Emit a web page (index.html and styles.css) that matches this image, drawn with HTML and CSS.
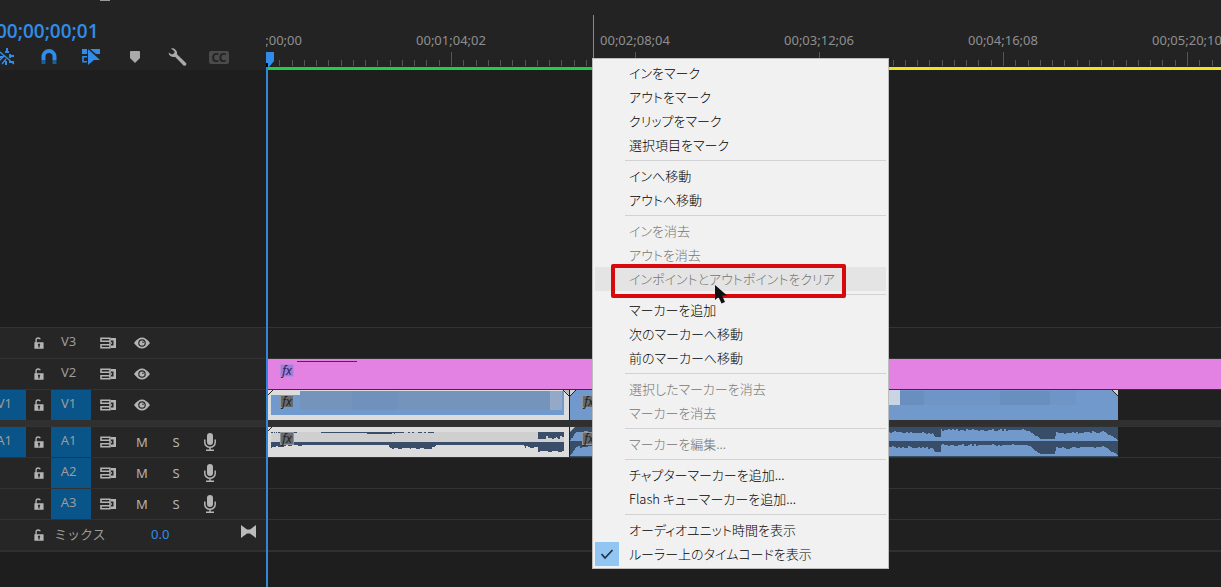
FILE: index.html
```html
<!DOCTYPE html>
<html lang="ja">
<head>
<meta charset="utf-8">
<title>タイムライン</title>
<link rel="stylesheet" href="styles.css">
</head>
<body>
<svg class="defs" aria-hidden="true">
  <symbol id="lock" viewBox="0 0 12 16"><path d="M2.500 8V4.500q0-2.500 2.500-2.500 2 0 2.500 1.500" fill="none" stroke="currentColor" stroke-width="1.600"/><path fill-rule="evenodd" d="M.5 7h11v8H.5zM6 8.500a1.500 1.500 0 0 0-.8 2.700V13.500h1.600v-2.300A1.500 1.500 0 0 0 6 8.500z" fill="currentColor"/></symbol>
  <symbol id="sync" viewBox="0 0 16 12"><path d="M1 1.200h9v3H1zM1 7.800h9v3H1z" fill="none" stroke="currentColor" stroke-width="1.600"/><path d="M11 1h5v10h-5V8.500h2.500v-5H11zM9 5.200h3v1.600H9z" fill="currentColor"/></symbol>
  <symbol id="eye" viewBox="0 0 16 12"><path fill-rule="evenodd" d="M0 6q8-11 16 0-8 11-16 0zM8 2.200a3.800 3.800 0 1 0 0 7.600 3.800 3.800 0 0 0 0-7.600z" fill="currentColor"/><circle cx="8" cy="6" r="2.600" fill="currentColor"/><circle cx="9" cy="5.300" r=".8" fill="#262626"/></symbol>
  <symbol id="mic" viewBox="0 0 14 18"><rect x="4" y="0" width="6" height="12" rx="3" fill="currentColor"/><path d="M1.800 6.500v3a5.200 4.800 0 0 0 10.400 0v-3M7 14v3M3 17.200h8" fill="none" stroke="currentColor" stroke-width="1.500"/></symbol>
</svg>
<main class="app">
  <header class="top">
    <div class="controls">
      <i class="grip"></i>
      <div class="timecode">00;00;00;01</div>
      <div class="tools">
        <button class="tool tool-nest" aria-label="ネスト"><svg width="18" height="18" viewBox="0 0 18 18" fill="none" stroke="currentColor"><path stroke-width="2" d="M9 0v5M7 4h4M12 6v4M11 8h5M0 9h5M11 14h5M8 13v4"/><path stroke-width="1.400" d="M2 4l14 12M6 8l-5 5M8 11l-4 5"/></svg></button>
        <button class="tool tool-snap" aria-label="スナップ"><svg width="16" height="16" viewBox="0 0 16 16"><path d="M2.500 11V7.500a5.500 5.500 0 0 1 11 0V11" fill="none" stroke="currentColor" stroke-width="4"/><path d="M.5 11h4v4h-4zM11.500 11h4v4h-4z" fill="#1d5c9f"/></svg></button>
        <button class="tool tool-link" aria-label="リンクされた選択"><svg width="19" height="18" viewBox="0 0 19 18"><path d="M0 1h5v5H0zM8 1h10v5h-4L8 1z" fill="currentColor"/><path d="M5 8.800H1v5h4" fill="none" stroke="currentColor" stroke-width="1.600"/><path d="M6 1l12 11h-6l-6 5z" fill="currentColor"/></svg></button>
        <button class="tool tool-mark" aria-label="マーカーを追加"><svg width="10" height="12" viewBox="0 0 10 12"><path d="M1 0h8q1 0 1 1v6l-5 5-5-5V1q0-1 1-1z" fill="currentColor"/></svg></button>
        <button class="tool tool-wrench" aria-label="表示設定"><svg width="20" height="20" viewBox="0 0 20 20"><path d="M3 1.500a5 5 0 0 1 6 5.700l9 8.800a1.800 1.800 0 0 1-2.500 2.500L7 9.700A5 5 0 0 1 .5 5.500l3.500 2 2.300-1.300.2-2z" fill="currentColor"/></svg></button>
        <button class="tool tool-cc" aria-label="キャプション">CC</button>
      </div>
    </div>
    <div class="ruler">
      <div class="ruler-cells">
        <span class="cell">00;00;00;00</span><span class="cell">00;01;04;02</span><span class="cell">00;02;08;04</span><span class="cell">00;03;12;06</span><span class="cell">00;04;16;08</span><span class="cell">00;05;20;10</span>
      </div>
      <svg class="ticks" id="ticks" aria-hidden="true"></svg>
      <div class="render"><i class="render-green"></i><i class="render-yellow"></i></div>
    </div>
  </header>

  <div class="blank"></div>

  <section class="tracks">
    <div class="track">
      <div class="head"><span class="patch"></span><button class="ic" aria-label="ロック"><svg width="12" height="16"><use href="#lock"/></svg></button><button class="target">V3</button><button class="ic sync" aria-label="同期ロック"><svg width="16" height="12"><use href="#sync"/></svg></button><button class="ic" aria-label="表示"><svg width="16" height="12"><use href="#eye"/></svg></button></div>
      <div class="lane"></div>
    </div>
    <div class="track">
      <div class="head"><span class="patch"></span><button class="ic" aria-label="ロック"><svg width="12" height="16"><use href="#lock"/></svg></button><button class="target">V2</button><button class="ic sync" aria-label="同期ロック"><svg width="16" height="12"><use href="#sync"/></svg></button><button class="ic" aria-label="表示"><svg width="16" height="12"><use href="#eye"/></svg></button></div>
      <div class="lane"><div class="clip pink"><span class="fx">fx</span><i class="name-line"></i></div></div>
    </div>
    <div class="track">
      <div class="head"><button class="patch on">V1</button><button class="ic" aria-label="ロック"><svg width="12" height="16"><use href="#lock"/></svg></button><button class="target on">V1</button><button class="ic sync" aria-label="同期ロック"><svg width="16" height="12"><use href="#sync"/></svg></button><button class="ic" aria-label="表示"><svg width="16" height="12"><use href="#eye"/></svg></button></div>
      <div class="lane">
        <div class="clip first">
          <svg class="art" width="301" height="30"><path fill="#dcdcdc" d="M0 0h301v30H0z"/><path fill="#7099cd" d="M3 5h29V1h264v24H3z"/><path fill="#7594bb" d="M32 1h250v19H32z"/><path fill="#7191bd" d="M84 1h46v19H84z"/><path fill="#94a9c7" d="M282 1h12v19h-12z"/><path d="M0 5l5-5M295 0l6 6" stroke="#222" stroke-width="1"/><path fill="#b8b8b8" d="M296 0h5v5z"/></svg>
          <span class="fx">fx</span>
        </div>
        <div class="clip second">
          <svg class="art" width="548" height="30"><path fill="#7199cc" d="M0 0h548v30H0z"/><path fill="#c9d5e3" d="M300 0h30v15h-30z"/><path fill="#688fbe" d="M330 1h150v14H330z"/><path fill="#6e95c5" d="M354 1h76v14h-76zM480 1h26v14h-26z"/><path fill="#d0d0d0" d="M0 0h6L0 6zM542 0h6v6z"/><path d="M0 6l6-6M542 0l6 6" stroke="#222"/></svg>
          <span class="fx">fx</span>
        </div>
      </div>
    </div>
    <div class="divider"></div>
    <div class="track">
      <div class="head"><button class="patch on">A1</button><button class="ic" aria-label="ロック"><svg width="12" height="16"><use href="#lock"/></svg></button><button class="target on">A1</button><button class="ic sync" aria-label="同期ロック"><svg width="16" height="12"><use href="#sync"/></svg></button><button class="ic">M</button><button class="ic">S</button><button class="ic" aria-label="録音"><svg width="14" height="18"><use href="#mic"/></svg></button></div>
      <div class="lane">
        <div class="clip first"><svg class="art" id="wave1" width="301" height="30"></svg><span class="fx">fx</span></div>
        <div class="clip second"><svg class="art" id="wave2" width="548" height="30"></svg><span class="fx">fx</span></div>
      </div>
    </div>
    <div class="track">
      <div class="head"><span class="patch"></span><button class="ic" aria-label="ロック"><svg width="12" height="16"><use href="#lock"/></svg></button><button class="target on">A2</button><button class="ic sync" aria-label="同期ロック"><svg width="16" height="12"><use href="#sync"/></svg></button><button class="ic">M</button><button class="ic">S</button><button class="ic" aria-label="録音"><svg width="14" height="18"><use href="#mic"/></svg></button></div>
      <div class="lane"></div>
    </div>
    <div class="track">
      <div class="head"><span class="patch"></span><button class="ic" aria-label="ロック"><svg width="12" height="16"><use href="#lock"/></svg></button><button class="target on">A3</button><button class="ic sync" aria-label="同期ロック"><svg width="16" height="12"><use href="#sync"/></svg></button><button class="ic">M</button><button class="ic">S</button><button class="ic" aria-label="録音"><svg width="14" height="18"><use href="#mic"/></svg></button></div>
      <div class="lane"></div>
    </div>
    <div class="track">
      <div class="head"><span class="patch"></span><button class="ic" aria-label="ロック"><svg width="12" height="16"><use href="#lock"/></svg></button><span class="mix">ミックス</span><span class="mix-value">0.0</span><button class="bowtie" aria-label="展開"><svg width="15" height="13" viewBox="0 0 15 13"><path d="M0 0l6 4.500h3L15 0v13L9 8.500H6L0 13z" fill="currentColor"/></svg></button></div>
      <div class="lane"></div>
    </div>
  </section>
  <div class="foot"></div>

  <svg class="playhead" width="8" height="16" viewBox="0 0 8 16" aria-hidden="true"><path d="M0 0h8v9l-5 6H0z" fill="#318ce7"/><path d="M0 11h2v4H0z" fill="#000"/></svg>
  <i class="playline"></i>
  <i class="hoverline"></i>

  <div class="menu" role="menu">
    <button role="menuitem">インをマーク</button>
    <button role="menuitem">アウトをマーク</button>
    <button role="menuitem">クリップをマーク</button>
    <button role="menuitem">選択項目をマーク</button>
    <hr>
    <button role="menuitem">インへ移動</button>
    <button role="menuitem">アウトへ移動</button>
    <hr>
    <button role="menuitem" disabled>インを消去</button>
    <button role="menuitem" disabled>アウトを消去</button>
    <button role="menuitem" class="hot" disabled>インポイントとアウトポイントをクリア</button>
    <hr>
    <button role="menuitem">マーカーを追加</button>
    <button role="menuitem">次のマーカーへ移動</button>
    <button role="menuitem">前のマーカーへ移動</button>
    <hr>
    <button role="menuitem" disabled>選択したマーカーを消去</button>
    <button role="menuitem" disabled>マーカーを消去</button>
    <hr>
    <button role="menuitem" disabled>マーカーを編集...</button>
    <hr>
    <button role="menuitem">チャプターマーカーを追加...</button>
    <button role="menuitem">Flash キューマーカーを追加...</button>
    <hr>
    <button role="menuitem">オーディオユニット時間を表示</button>
    <button role="menuitemcheckbox" aria-checked="true" class="checked"><span class="check"><svg width="14" height="12" viewBox="0 0 14 12"><path d="M1.500 6l3.500 4L12.500 2" fill="none" stroke="#1f3345" stroke-width="1.700"/></svg></span>ルーラー上のタイムコードを表示</button>
    <div class="callout"></div>
    <svg class="cursor" width="14" height="20" viewBox="0 0 14 20" aria-hidden="true"><path d="M1 1v15l3.500-3 3 6.500 3.500-1.500-3-6.500h5z" fill="#111"/></svg>
  </div>
</main>
<script src="timeline.js"></script>
</body>
</html>
```

FILE: styles.css
```css
* { box-sizing: border-box; }
body { margin: 0; background: #1e1e1e; font-family: "Noto Sans", "Noto Sans CJK JP", sans-serif; font-size: 13px; color: #9c9c9c; overflow: hidden; }
button { appearance: none; border: 0; margin: 0; padding: 0; background: none; font: inherit; color: inherit; }
svg { display: block; }
.defs { position: absolute; width: 0; height: 0; }
.app { position: relative; min-height: 100vh; display: flex; flex-direction: column; overflow: hidden; }

.top { display: grid; grid-template-columns: 266px 1fr; height: 70px; background: #232323; }
.controls { overflow: hidden; }
.grip { display: block; width: 10px; height: 1px; margin-left: 100px; background: #999; }
.timecode { margin: 17px 0 0 -4px; font-family: "Open Sans", "Noto Sans", sans-serif; font-size: 19px; font-weight: 600; line-height: 26px; color: #318ce7; }
.tools { display: flex; align-items: center; height: 26px; color: #aaa; }
.tool { display: flex; }
.tool-nest { margin-left: -2px; }
.tool-snap { margin-left: 25px; }
.tool-link { margin-left: 25px; }
.tool-nest, .tool-snap, .tool-link { color: #318ce7; }
.tool-mark { margin-left: 29px; }
.tool-wrench { margin-left: 28px; }
.tool-cc { margin-left: 21px; width: 20px; height: 13px; justify-content: center; align-items: center; border-radius: 2px; background: #4b4b4b; color: #232323; font-size: 12px; font-weight: 700; line-height: 13px; }

.ruler { display: flex; flex-direction: column; overflow: hidden; min-width: 0; }
.ruler-cells { display: flex; margin-left: -91px; height: 52px; padding-top: 30px; }
.cell { flex: none; width: 184px; text-align: center; line-height: 20px; color: #8f8f8f; }
.ticks { width: 100%; height: 15px; }
.render { display: flex; height: 3px; padding-left: 2px; }
.render-green { width: 325px; background: #1fd046; }
.render-yellow { flex: 1; background: #efe51f; }

.blank { flex: 1; }
.track { display: grid; grid-template-columns: 266px 1fr; height: 31px; border-top: 1px solid #333; }
.head { display: flex; background: #262626; overflow: hidden; }
.patch { display: flex; align-items: center; width: 26px; flex: none; margin-right: 8px; line-height: 18px; padding-bottom: 4px; }
.patch.on { background: #095488; justify-content: flex-end; padding-right: 14px; }
.ic { display: flex; align-items: center; justify-content: center; width: 34px; color: #b4b4b4; }
.patch + .ic { width: 10px; margin-right: 7px; }
.target { width: 40px; padding: 0 5px 4px 0; }
.target.on { background: #095488; }
.ic.sync { width: 34px; }
.mix { width: 95px; padding-left: 3px; line-height: 28px; }
.mix-value { flex: 1; padding-left: 5px; line-height: 28px; color: #318ce7; }
.bowtie { display: flex; padding: 5px 10px 0 0; color: #bbb; }
.lane { display: flex; min-width: 0; padding-left: 2px; overflow: hidden; background: #202020; }
.clip { position: relative; flex: none; height: 30px; }
.first { width: 301px; margin-right: 1px; }
.second { width: 548px; }
.pink { flex: 1; background: #e382e3; }
.fx { position: absolute; left: 12px; top: 5px; width: 14px; height: 13px; border: 1px solid #8f959b; background: #686b6d; color: #222; font-size: 12px; font-style: italic; line-height: 11px; text-align: center; }
.pink .fx { background: #a37bdc; border-color: #b88bdd; color: #35214e; }
.name-line { position: absolute; left: 29px; top: 2px; width: 60px; height: 1px; background: #4a2a4a; }
.divider { height: 6px; background: #303030; }
.foot { height: 37px; border-top: 2px solid #303030; }

.playhead { position: absolute; left: 266px; top: 52px; }
.playline { position: absolute; left: 266px; top: 67px; bottom: 0; width: 2px; background: #3187d8; }
.hoverline { position: absolute; left: 593px; top: 15px; width: 1px; height: 43px; background: #8a8a8a; }

.menu { position: absolute; left: 592px; top: 58px; width: 297px; padding: 2px; border: 1px solid #bdbdbd; background: #f1f1f1; color: #000; font-family: "Noto Sans CJK JP", sans-serif; font-size: 13px; font-weight: 300; font-feature-settings: "palt"; }
.menu button { display: flex; align-items: center; width: 100%; height: 24px; padding-left: 34px; line-height: 24px; white-space: nowrap; }
.menu button:disabled { color: #757575; }
.menu .hot { background: #e4e4e4; }
.menu hr { height: 1px; margin: 3px 0 3px 30px; border: 0; background: #d2d2d2; }
.menu .checked { padding-left: 0; }
.check { display: flex; align-items: center; justify-content: center; width: 24px; height: 24px; margin-right: 10px; background: #91c6f3; }
.callout { position: absolute; left: 18px; top: 205px; width: 235px; height: 34px; border: 4px solid #d7090d; border-radius: 2px; }
.cursor { position: absolute; left: 121px; top: 225px; }
```

FILE: timeline.js
```js
// Ruler ticks: one major tick per label, fifteen divisions between majors.
let ticks = '';
for (let i = 0; i < 240; i++) {
  const x = Math.round(1 + i * 184 / 15);
  const top = i % 15 === 0 ? 0 : 8;
  ticks += `M${x} ${top}h1V14h-1z`;
}
document.getElementById('ticks').innerHTML = `<path fill="#555" d="${ticks}"/>`;

function noise(n) {
  const v = Math.sin(n * 12.9898) * 43758.5453;
  return v - Math.floor(v) - 0.5;
}

// Envelope points are [x, depth, jitter]; depth is interpolated between points.
function bars(points, y, limit) {
  let d = '';
  for (let x = points[0][0]; x < points[points.length - 1][0]; x++) {
    const i = points.findIndex((p, n) => n + 1 < points.length && x >= p[0] && x < points[n + 1][0]);
    const a = points[i], b = points[i + 1];
    const t = (x - a[0]) / (b[0] - a[0]);
    const h = Math.round(Math.min(limit, a[1] + (b[1] - a[1]) * t + noise(Math.floor(x / 2) + y) * a[2]));
    if (h > 0) d += `M${x} ${y}h1v${h}h-1z`;
  }
  return d;
}

const up1 = [[3, 1, 1], [14, 0, 0], [28, 1, 1], [30, 0, 0], [122, 2, 2], [140, 1, 2], [165, 1, 0], [166, 0, 0], [257, 0, 1], [264, 0, 0], [269, 0, 0], [270, 7, 3], [280, 5, 3], [296, 6, 2]];
const low1 = [[3, 5, 2], [36, 3, 1], [120, 3, 1], [122, 7, 2], [166, 6, 2], [168, 3, 1], [255, 3, 1], [257, 5, 2], [269, 5, 2], [270, 10, 1], [276, 9, 2], [296, 10, 1]];
document.getElementById('wave1').innerHTML =
  `<path fill="#dcdcdc" d="M0 0h301v30H0z"/><path fill="#cfcfcf" d="M3 5h293v10H3z"/><path fill="#3a4e69" d="${bars(up1, 5, 10)}${bars(low1, 15, 10)}"/><path stroke="#222" d="M0 4l4-4"/>`;

const env2 = [[0, 13, 1], [6, 5, 3], [318, 5, 2], [362, 6, 2], [365, 10, 1], [370, 10, 1], [371, 3, 2], [455, 3, 2], [461, 5, 2], [470, 12, 0], [484, 12, 0], [486, 6, 2], [534, 5, 2], [546, 12, 0], [548, 13, 0]];
document.getElementById('wave2').innerHTML =
  `<path fill="#7199cc" d="M0 0h548v30H0z"/><path fill="#384d67" d="${bars(env2, 0, 14)}${bars(env2, 15, 14)}M0 14h548v1H0zM0 29h548v1H0z"/><path fill="#ccc" d="M0 0h5L0 5z"/>`;
```
